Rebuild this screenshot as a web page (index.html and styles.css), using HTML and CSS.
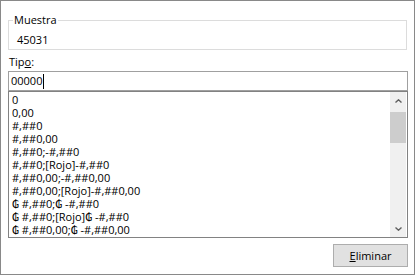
FILE: index.html
```html
<!DOCTYPE html>
<html>
<head>
  <link rel="stylesheet" href="styles.css">
</head>
<body>
  <div class="panel">
    <fieldset class="sample">
      <legend>Muestra</legend>
      <div class="sample-value">45031</div>
    </fieldset>

    <label class="type-label" for="typeInput">Tip<u>o</u>:</label>
    <div class="textbox" id="typeInput">00000<span class="caret"></span></div>

    <div class="listbox">
      <div class="items">
        <div class="item">0</div>
        <div class="item">0,00</div>
        <div class="item">#,##0</div>
        <div class="item">#,##0,00</div>
        <div class="item">#,##0;-#,##0</div>
        <div class="item">#,##0;[Rojo]-#,##0</div>
        <div class="item">#,##0,00;-#,##0,00</div>
        <div class="item">#,##0,00;[Rojo]-#,##0,00</div>
        <div class="item">₲ #,##0;₲ -#,##0</div>
        <div class="item">₲ #,##0;[Rojo]₲ -#,##0</div>
        <div class="item">₲ #,##0,00;₲ -#,##0,00</div>
      </div>
      <div class="scrollbar">
        <div class="scroll-btn">
          <svg width="7" height="4" viewBox="0 0 7 4"><polyline points="0.5,3.5 3.5,0.8 6.5,3.5" fill="none" stroke="#606060" stroke-width="1.4"/></svg>
        </div>
        <div class="track">
          <div class="thumb"></div>
        </div>
        <div class="scroll-btn">
          <svg width="7" height="4" viewBox="0 0 7 4"><polyline points="0.5,0.5 3.5,3.2 6.5,0.5" fill="none" stroke="#606060" stroke-width="1.4"/></svg>
        </div>
      </div>
    </div>

    <button class="delete-btn"><u>E</u>liminar</button>
  </div>
</body>
</html>
```

FILE: styles.css
```css
body {
  margin: 0;
  background: #fff;
  font-family: "Open Sans", "DejaVu Sans", sans-serif;
  font-size: 11px;
  color: #000;
}
.panel {
  width: 415px;
  height: 275px;
  box-sizing: border-box;
  border: 1px solid #898989;
  padding: 12px 6px 0 7px;
  display: flex;
  flex-direction: column;
}
.sample {
  margin: 0 1px 0 0;
  padding: 0 0 2px 4px;
  border: 1px solid #dcdcdc;
  min-width: 0;
}
.sample legend {
  padding: 0 1px;
  line-height: 14px;
}
.sample-value {
  margin-top: 6px;
  padding-left: 4px;
  line-height: 14px;
}
.type-label {
  margin-top: 5px;
  margin-bottom: 2px;
  line-height: 14px;
  padding-left: 1px;
}
.textbox {
  height: 20px;
  box-sizing: border-box;
  border: 1px solid #a0a0a0;
  padding: 0 2px;
  line-height: 18px;
  display: flex;
  align-items: center;
}
.caret {
  display: inline-block;
  width: 1px;
  height: 15px;
  background: #000;
  margin-left: 1px;
}
.listbox {
  height: 147px;
  box-sizing: border-box;
  border: 1px solid #828282;
  display: flex;
}
.items {
  flex: 1;
  padding: 1px 0 0 3px;
  overflow: hidden;
}
.item {
  line-height: 13px;
  height: 13px;
  white-space: nowrap;
}
.scrollbar {
  width: 16px;
  margin-right: 1px;
  background: #f0f0f0;
  display: flex;
  flex-direction: column;
}
.scroll-btn {
  height: 17px;
  display: flex;
  align-items: center;
  justify-content: center;
}
.scroll-btn svg {
  display: block;
}
.track {
  flex: 1;
  padding-top: 3px;
}
.thumb {
  height: 31px;
  background: #cdcdcd;
}
.delete-btn {
  align-self: flex-end;
  margin-top: 6px;
  width: 75px;
  height: 23px;
  box-sizing: border-box;
  border: 1px solid #adadad;
  background: #e1e1e1;
  font-family: inherit;
  font-size: 11px;
  color: #000;
  padding: 0;
}
```
